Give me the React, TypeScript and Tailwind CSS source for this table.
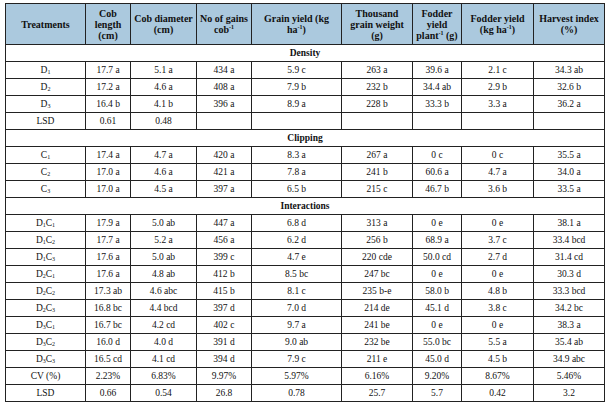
import React from 'react'

type Row = { t: React.ReactNode; v: string[] }

const Sub = ({ n }: { n: number }) => <sub className="text-[6px]">{n}</sub>
const Sup = () => <sup className="text-[6px] -top-[4px]">-1</sup>

const D = (a: number) => (
  <>
    D<Sub n={a} />
  </>
)
const C = (a: number) => (
  <>
    C<Sub n={a} />
  </>
)
const DC = (a: number, b: number) => (
  <>
    D<Sub n={a} />C<Sub n={b} />
  </>
)

const density: Row[] = [
  { t: D(1), v: ['17.7 a', '5.1 a', '434 a', '5.9 c', '263 a', '39.6 a', '2.1 c', '34.3 ab'] },
  { t: D(2), v: ['17.2 a', '4.6 a', '408 a', '7.9 b', '232 b', '34.4 ab', '2.9 b', '32.6 b'] },
  { t: D(3), v: ['16.4 b', '4.1 b', '396 a', '8.9 a', '228 b', '33.3 b', '3.3 a', '36.2 a'] },
  { t: 'LSD', v: ['0.61', '0.48', '', '', '', '', '', ''] },
]

const clipping: Row[] = [
  { t: C(1), v: ['17.4 a', '4.7 a', '420 a', '8.3 a', '267 a', '0 c', '0 c', '35.5 a'] },
  { t: C(2), v: ['17.0 a', '4.6 a', '421 a', '7.8 a', '241 b', '60.6 a', '4.7 a', '34.0 a'] },
  { t: C(3), v: ['17.0 a', '4.5 a', '397 a', '6.5 b', '215 c', '46.7 b', '3.6 b', '33.5 a'] },
]

const interactions: Row[] = [
  { t: DC(1, 1), v: ['17.9 a', '5.0 ab', '447 a', '6.8 d', '313 a', '0 e', '0 e', '38.1 a'] },
  { t: DC(1, 2), v: ['17.7 a', '5.2 a', '456 a', '6.2 d', '256 b', '68.9 a', '3.7 c', '33.4 bcd'] },
  { t: DC(1, 3), v: ['17.6 a', '5.0 ab', '399 c', '4.7 e', '220 cde', '50.0 cd', '2.7 d', '31.4 cd'] },
  { t: DC(2, 1), v: ['17.6 a', '4.8 ab', '412 b', '8.5 bc', '247 bc', '0 e', '0 e', '30.3 d'] },
  { t: DC(2, 2), v: ['17.3 ab', '4.6 abc', '415 b', '8.1 c', '235 b-e', '58.0 b', '4.8 b', '33.3 bcd'] },
  { t: DC(2, 3), v: ['16.8 bc', '4.4 bcd', '397 d', '7.0 d', '214 de', '45.1 d', '3.8 c', '34.2 bc'] },
  { t: DC(3, 1), v: ['16.7 bc', '4.2 cd', '402 c', '9.7 a', '241 be', '0 e', '0 e', '38.3 a'] },
  { t: DC(3, 2), v: ['16.0 d', '4.0 d', '391 d', '9.0 ab', '232 be', '55.0 bc', '5.5 a', '35.4 ab'] },
  { t: DC(3, 3), v: ['16.5 cd', '4.1 cd', '394 d', '7.9 c', '211 e', '45.0 d', '4.5 b', '34.9 abc'] },
  { t: 'CV (%)', v: ['2.23%', '6.83%', '9.97%', '5.97%', '6.16%', '9.20%', '8.67%', '5.46%'] },
  { t: 'LSD', v: ['0.66', '0.54', '26.8', '0.78', '25.7', '5.7', '0.42', '3.2'] },
]

const td = 'border border-[#222] p-0 text-center align-middle'

function Rows({ rows }: { rows: Row[] }) {
  return (
    <>
      {rows.map((r, i) => (
        <tr key={i} className="h-[17px]">
          <td className={td}>{r.t}</td>
          {r.v.map((x, j) => (
            <td key={j} className={td}>
              {x}
            </td>
          ))}
        </tr>
      ))}
    </>
  )
}

function Section({ title }: { title: string }) {
  return (
    <tr className="h-[17px]">
      <td colSpan={9} className={`${td} font-bold`}>
        {title}
      </td>
    </tr>
  )
}

export default function App() {
  return (
    <div className="bg-white w-[614px] h-[409px] pl-[5px] pt-[3px] overflow-hidden">
      <table
        className="table-fixed border-collapse w-[599px] text-[9.5px] leading-[15px] text-[#111]"
        style={{ fontFamily: '"Liberation Serif", serif' }}
      >
        <colgroup>
          <col className="w-[80px]" />
          <col className="w-[45px]" />
          <col className="w-[66px]" />
          <col className="w-[55px]" />
          <col className="w-[90px]" />
          <col className="w-[71px]" />
          <col className="w-[49px]" />
          <col className="w-[72px]" />
          <col className="w-[71px]" />
        </colgroup>
        <thead>
          <tr className="h-[41px] bg-[#abc9de] font-bold text-[10px] leading-[11px]">
            <th className={td}>Treatments</th>
            <th className={td}>
              Cob
              <br />
              length
              <br />
              (cm)
            </th>
            <th className={td}>
              Cob diameter
              <br />
              (cm)
            </th>
            <th className={td}>
              No of gains
              <br />
              cob<Sup />
            </th>
            <th className={td}>
              Grain yield (kg
              <br />
              ha<Sup />)
            </th>
            <th className={td}>
              Thousand
              <br />
              grain weight
              <br />
              (g)
            </th>
            <th className={td}>
              Fodder
              <br />
              yield
              <br />
              plant<Sup /> (g)
            </th>
            <th className={td}>
              Fodder yield
              <br />
              (kg ha<Sup />)
            </th>
            <th className={td}>
              Harvest index
              <br />
              (%)
            </th>
          </tr>
        </thead>
        <tbody>
          <Section title="Density" />
          <Rows rows={density} />
          <Section title="Clipping" />
          <Rows rows={clipping} />
          <Section title="Interactions" />
          <Rows rows={interactions} />
        </tbody>
      </table>
    </div>
  )
}
